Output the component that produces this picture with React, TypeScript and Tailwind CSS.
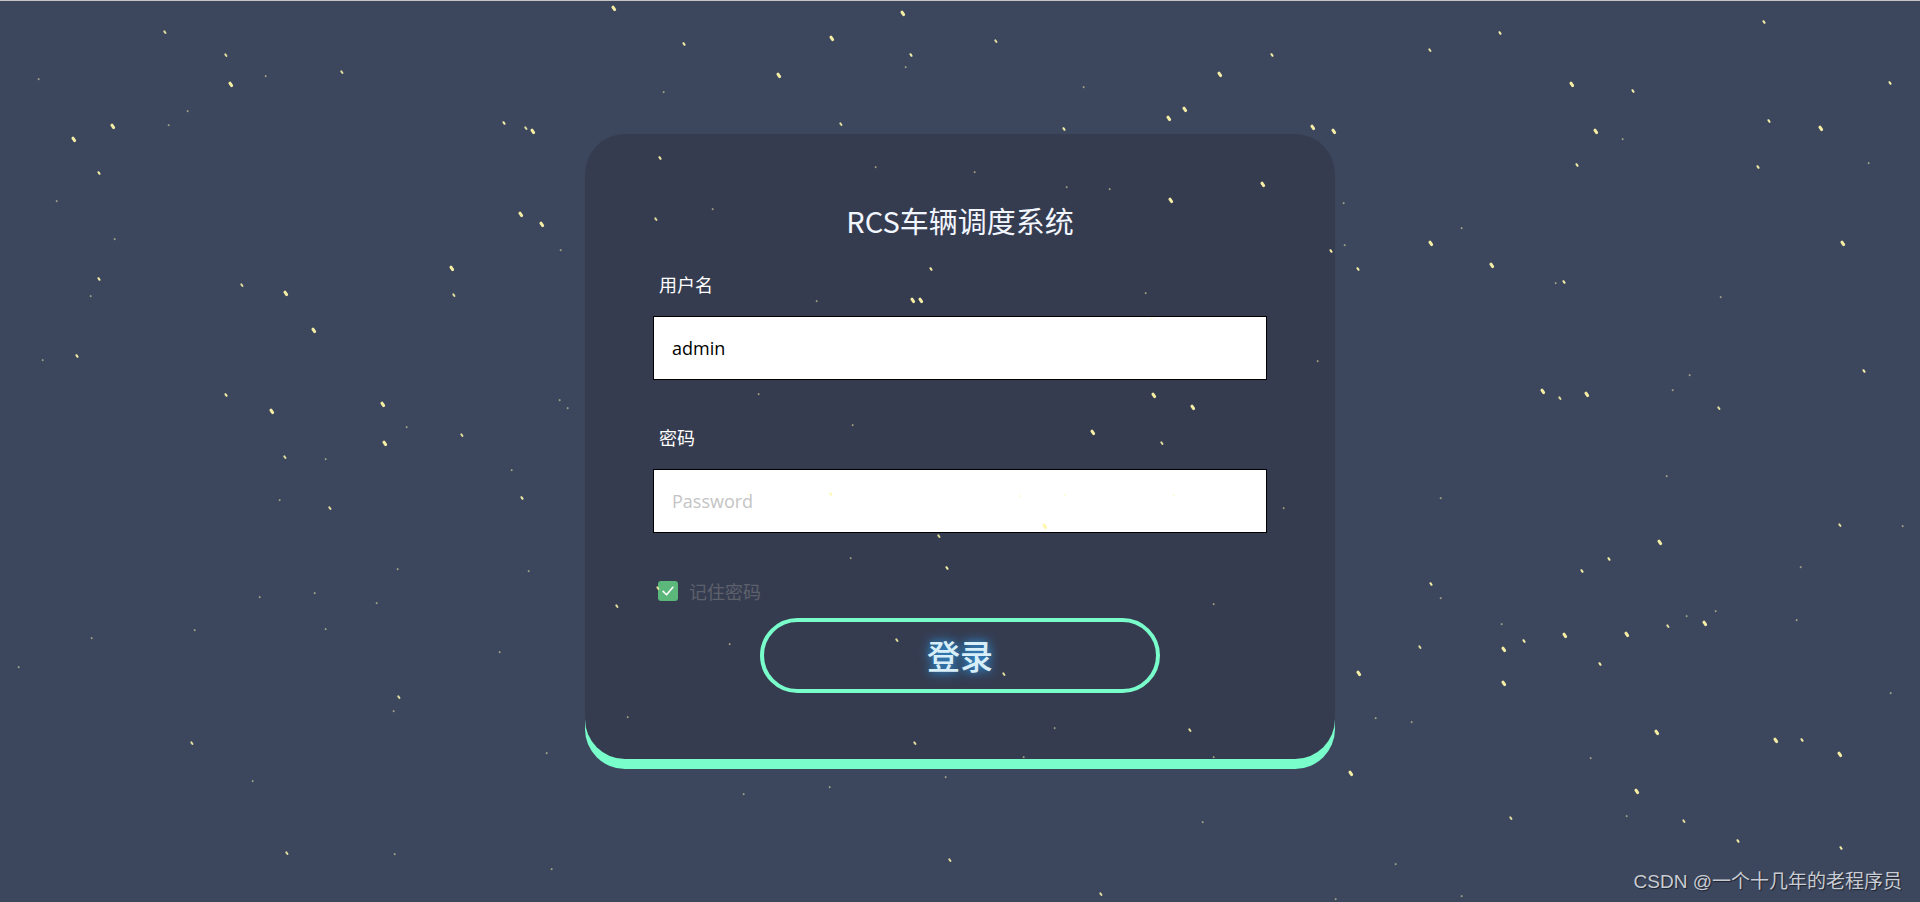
import { useMemo } from 'react';

type Star = { x: number; y: number; w: number; h: number; o: number };

// brighter stars picked off the reference (page px)
const bright: [number, number][] = [
    [611, 6], [228, 82], [110, 124], [71, 137], [97, 171], [530, 129], [502, 121], [518, 212],
    [539, 222], [449, 266], [97, 277], [283, 291], [311, 328], [75, 354], [224, 393], [269, 409],
    [380, 402], [382, 441], [520, 496], [829, 36], [900, 11], [909, 53], [776, 73], [682, 42],
    [1498, 31], [1762, 20], [1270, 53], [1217, 72], [1569, 82], [1631, 89], [1888, 81], [1818, 126],
    [1331, 129], [1310, 125], [1767, 119], [1593, 129], [1756, 165], [1575, 163], [1428, 241],
    [1489, 263], [1562, 280], [1840, 241], [1356, 267], [1862, 369], [1584, 392], [1540, 389],
    [1657, 540], [1607, 557], [1580, 569], [1429, 582], [1522, 639], [1624, 632], [1702, 621],
    [1562, 633], [1501, 647], [1598, 662], [1356, 671], [1773, 738], [1837, 752], [1800, 738],
    [1736, 839], [1839, 846], [1348, 771], [1634, 789], [1501, 681], [1654, 730], [1062, 127],
    [1166, 116], [1182, 107], [658, 156], [1168, 198], [929, 267], [910, 298], [918, 298],
    [1329, 249], [1260, 182], [1190, 405], [1151, 393], [1090, 430], [1042, 524], [945, 566],
];

function rng(seed: number) {
    return () => {
        seed |= 0;
        seed = (seed + 0x6d2b79f5) | 0;
        let t = Math.imul(seed ^ (seed >>> 15), 1 | seed);
        t = (t + Math.imul(t ^ (t >>> 7), 61 | t)) ^ t;
        return ((t ^ (t >>> 14)) >>> 0) / 4294967296;
    };
}

function makeStars(): Star[] {
    const r = rng(42);
    const list: Star[] = bright.map(([x, y]) => {
        const big = r() > 0.35;
        return { x, y, w: big ? 6 : 4, h: big ? 2.5 : 2, o: 0.95 };
    });
    for (let i = 0; i < 120; i++) {
        const x = r() * 1920;
        const y = r() * 902;
        const tiny = r() > 0.3;
        list.push({ x, y, w: tiny ? 1.5 : 3.5, h: tiny ? 1.5 : 2, o: tiny ? 0.5 : 0.85 });
    }
    return list;
}

export default function App() {
    const stars = useMemo(makeStars, []);

    return (
        <div className="relative w-full h-[902px] overflow-hidden bg-[#3c475e] border-t border-[#c4c4c4] font-['Open_Sans','Noto_Sans_CJK_SC',sans-serif]">
            <div className="flex justify-center pt-[133px]">
                {/* Login card */}
                <div className="w-[750px] rounded-[40px] bg-[#363c50] shadow-[0_10px_0_0_#78fdcb] px-[68px] pt-[66px] pb-[66px] flex flex-col">
                    <h1 className="text-center text-[29px] leading-[40px] text-[#f2f6ff] font-['Noto_Sans_CJK_SC',sans-serif]">
                        RCS车辆调度系统
                    </h1>

                    <label className="mt-[32px] ml-[6px] text-[18px] leading-[24px] text-white font-['Noto_Sans_CJK_SC',sans-serif]">
                        用户名
                    </label>
                    <input
                        className="mt-[20px] h-[64px] w-full bg-white border border-black px-[18px] text-[18px] text-black outline-none"
                        defaultValue="admin"
                    />

                    <label className="mt-[45px] ml-[6px] text-[18px] leading-[24px] text-white font-['Noto_Sans_CJK_SC',sans-serif]">
                        密码
                    </label>
                    <input
                        type="password"
                        placeholder="Password"
                        className="mt-[20px] h-[64px] w-full bg-white border border-black px-[18px] text-[18px] text-black placeholder:text-[#c4c4c4] outline-none"
                    />

                    <div className="mt-[46px] ml-[5px] flex items-center gap-[11px] h-[24px]">
                        <span className="w-[20px] h-[20px] rounded-[3px] bg-[#5bb87a] flex items-center justify-center">
                            <svg width="14" height="14" viewBox="0 0 13 13" fill="none">
                                <path d="M2 6.8 L5.2 10 L11 3" stroke="white" strokeWidth="1.5" strokeLinecap="round" strokeLinejoin="round" />
                            </svg>
                        </span>
                        <span className="text-[18px] leading-[24px] text-[#5d616c] font-['Noto_Sans_CJK_SC',sans-serif]">记住密码</span>
                    </div>

                    <button className="mt-[15px] self-center w-[400px] h-[75px] rounded-full border-4 border-[#78fdcb] bg-transparent text-[33px] font-medium text-[#d8eef8] font-['Noto_Sans_CJK_SC',sans-serif] [text-shadow:0_0_8px_#2f8fd6,0_0_14px_rgba(47,143,214,0.6)]">
                        登录
                    </button>
                </div>
            </div>

            {/* star field */}
            <div className="pointer-events-none absolute inset-0">
                {stars.map((s, i) => (
                    <span
                        key={i}
                        className="absolute rounded-full bg-[#fff7a8] rotate-[55deg]"
                        style={{ left: s.x, top: s.y, width: s.w, height: s.h, opacity: s.o }}
                    />
                ))}
            </div>

            <div className="absolute right-[18px] bottom-[6px] text-[19px] text-[#c9ccd2] font-['Liberation_Sans','Noto_Sans_CJK_SC',sans-serif] [text-shadow:1px_1px_1px_#1c2230]">
                CSDN @一个十几年的老程序员
            </div>
        </div>
    );
}
